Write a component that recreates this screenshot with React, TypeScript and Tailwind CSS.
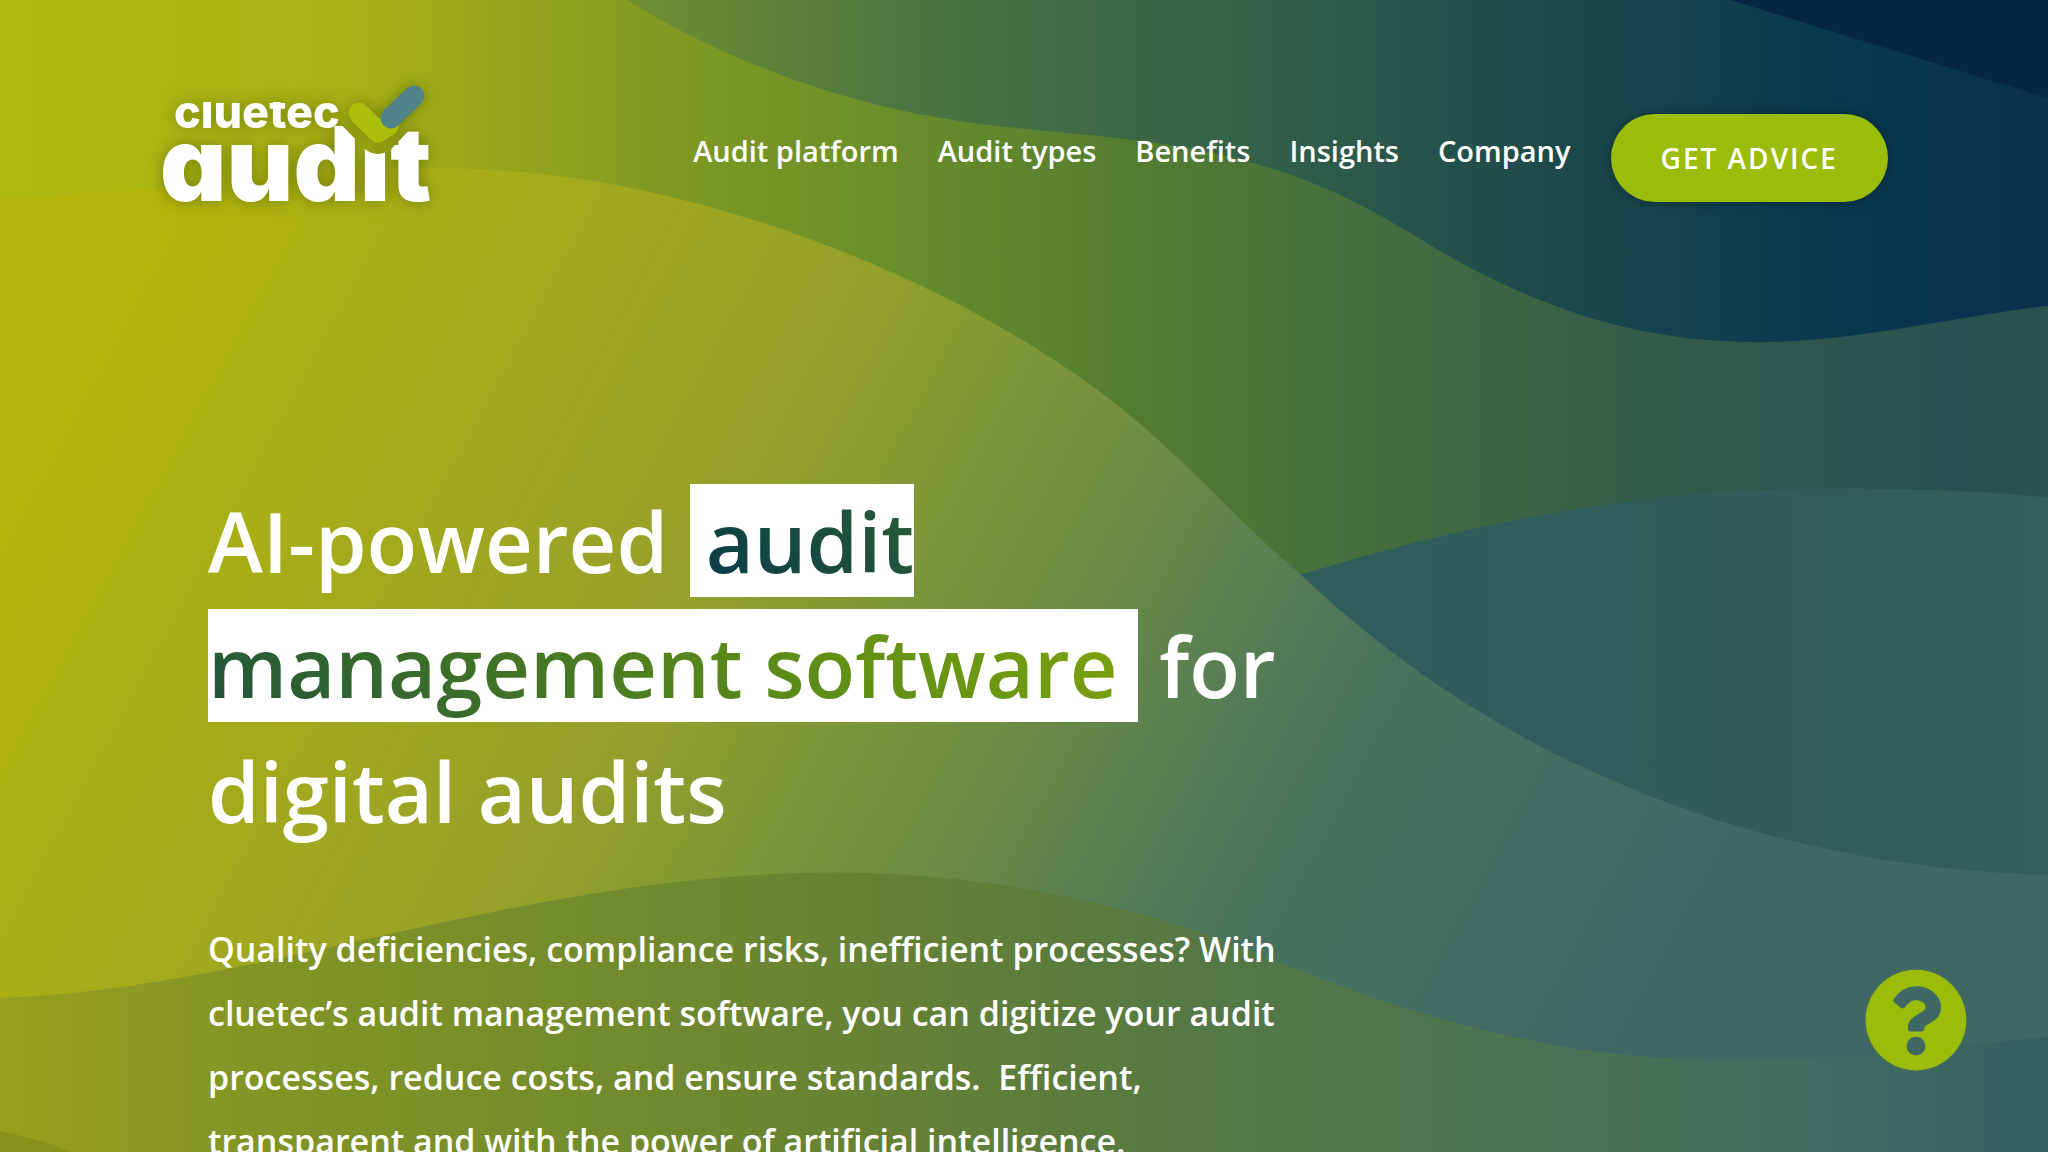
import { FaQuestionCircle } from 'react-icons/fa';

const NAV_LINKS = ['Audit platform', 'Audit types', 'Benefits', 'Insights', 'Company'];

function WaveBackground() {
  return (
    <svg
      className="absolute inset-0 h-full w-full"
      viewBox="0 0 1568 882"
      preserveAspectRatio="none"
      aria-hidden="true"
    >
      <defs>
        <linearGradient id="back" gradientUnits="userSpaceOnUse" x1="480" y1="0" x2="1568" y2="0">
          <stop offset="0" stopColor="#708f30" />
          <stop offset="0.2" stopColor="#4d7541" />
          <stop offset="0.45" stopColor="#32604a" />
          <stop offset="0.65" stopColor="#1d494b" />
          <stop offset="0.85" stopColor="#09384e" />
          <stop offset="1" stopColor="#0a314c" />
        </linearGradient>
        <linearGradient id="green" gradientUnits="userSpaceOnUse" x1="0" y1="0" x2="1568" y2="0">
          <stop offset="0" stopColor="#b0b910" />
          <stop offset="0.17" stopColor="#a9b115" />
          <stop offset="0.32" stopColor="#829a22" />
          <stop offset="0.43" stopColor="#6b8f2a" />
          <stop offset="0.55" stopColor="#557d30" />
          <stop offset="0.66" stopColor="#456f3d" />
          <stop offset="0.8" stopColor="#345c4a" />
          <stop offset="0.95" stopColor="#295151" />
          <stop offset="1" stopColor="#2a524f" />
        </linearGradient>
        <linearGradient id="teal" gradientUnits="userSpaceOnUse" x1="996" y1="0" x2="1568" y2="0">
          <stop offset="0" stopColor="#305e5d" />
          <stop offset="0.6" stopColor="#315c5a" />
          <stop offset="1" stopColor="#335f5c" />
        </linearGradient>
        <linearGradient id="front" gradientUnits="userSpaceOnUse" x1="50" y1="260" x2="1200" y2="880">
          <stop offset="0" stopColor="#b4b50a" />
          <stop offset="0.12" stopColor="#abaf14" />
          <stop offset="0.28" stopColor="#9ea621" />
          <stop offset="0.4" stopColor="#93a02b" />
          <stop offset="0.51" stopColor="#7c9538" />
          <stop offset="0.6" stopColor="#6b8b44" />
          <stop offset="0.69" stopColor="#587e53" />
          <stop offset="0.77" stopColor="#48725c" />
          <stop offset="0.88" stopColor="#446e62" />
          <stop offset="1" stopColor="#3f6864" />
        </linearGradient>
        <linearGradient id="bottom" gradientUnits="userSpaceOnUse" x1="0" y1="0" x2="1568" y2="0">
          <stop offset="0" stopColor="#96a01e" />
          <stop offset="0.12" stopColor="#839524" />
          <stop offset="0.3" stopColor="#738b2d" />
          <stop offset="0.45" stopColor="#638036" />
          <stop offset="0.6" stopColor="#547846" />
          <stop offset="0.75" stopColor="#4b7353" />
          <stop offset="0.88" stopColor="#436d61" />
          <stop offset="1" stopColor="#356062" />
        </linearGradient>
      </defs>

      <rect width="1568" height="882" fill="url(#back)" />
      <path d="M1325 0L1568 75V0Z" fill="#052742" />
      <path
        d="M0 0H480C560 50 660 85 760 96C840 105 900 106 970 128C1050 152 1090 190 1150 217C1220 250 1280 262 1350 262C1430 260 1480 245 1568 234V882H0Z"
        fill="url(#green)"
      />
      <path
        d="M996 440C1100 408 1240 374 1400 374C1470 374 1520 376 1568 381V700H1200Z"
        fill="url(#teal)"
      />
      <path
        d="M0 151C100 151 220 128 350 129C540 131 770 228 888 338C930 376 955 405 996 440C1150 586 1350 664 1568 670V882H0Z"
        fill="url(#front)"
      />
      <path
        d="M0 764C200 758 400 668 640 668C740 668 860 688 960 729C1080 778 1190 812 1330 812C1440 810 1500 800 1568 794V882H0Z"
        fill="url(#bottom)"
      />
      <path d="M0 866Q30 872 55 882H0Z" fill="#86941c" />
    </svg>
  );
}

function Logo() {
  return (
    <svg
      className="h-[130px] w-[280px] overflow-visible drop-shadow-[0_0_8px_rgba(60,80,0,0.5)]"
      viewBox="0 0 280 130"
      role="img"
      aria-label="cluetec audit"
    >
      <defs>
        {/* keeps the letters clear of the check mark */}
        <mask id="check-gap" maskUnits="userSpaceOnUse" x="0" y="0" width="280" height="130">
          <rect width="280" height="130" fill="white" />
          <path
            d="M192 25L218 52L255 13"
            fill="none"
            stroke="black"
            strokeWidth="40"
            strokeLinecap="round"
            strokeLinejoin="round"
          />
        </mask>
        <clipPath id="low-caps">
          <rect x="0" y="20" width="200" height="40" />
        </clipPath>
      </defs>
      <g
        fill="white"
        className="font-['Inter',sans-serif] [font-feature-settings:'cv11','ss01']"
      >
        <text x="14" y="46" fontSize="45" fontWeight="800" clipPath="url(#low-caps)">
          cluetec
        </text>
        <g mask="url(#check-gap)">
          <text x="0" y="119" fontSize="103" fontWeight="900">
            audit
          </text>
        </g>
      </g>
      <path
        d="M199 31L218 50L228 44"
        fill="none"
        stroke="#a9bf0a"
        strokeWidth="21"
        strokeLinecap="round"
        strokeLinejoin="round"
      />
      <path d="M231 36L254 14" fill="none" stroke="#4f8389" strokeWidth="21" strokeLinecap="round" />
    </svg>
  );
}

function Header() {
  return (
    <header className="flex items-start justify-between px-40 pt-[82px]">
      <a href="#home">
        <Logo />
      </a>
      <div className="mt-8 flex items-center gap-10">
        <nav className="flex gap-[39px] pb-[14px] text-[29px] font-semibold leading-10">
          {NAV_LINKS.map(link => (
            <a key={link} href={`#${link.toLowerCase().replace(' ', '-')}`} className="whitespace-nowrap">
              {link}
            </a>
          ))}
        </nav>
        <a
          href="#advice"
          className="flex h-[88px] items-center whitespace-nowrap rounded-full bg-[#9bbc08] px-[50px] text-[28px] font-semibold tracking-[2px] shadow-[0_0_12px_rgba(0,0,0,0.3)]"
        >
          GET ADVICE
        </a>
      </div>
    </header>
  );
}

export default function App() {
  return (
    <div className="relative h-screen overflow-hidden bg-[#6b8f2a] font-['Open_Sans',sans-serif] text-white">
      <WaveBackground />
      <div className="relative">
        <Header />
        <main className="px-[208px] pt-[266px]">
          <h1 className="max-w-[1120px] text-[83px] font-semibold leading-[125px]">
            AI-powered{' '}
            <span className="bg-white">
              <span className="bg-[linear-gradient(45deg,#06384a,#2c6032_28%,#5a8a18_65%,#7ea40c)] bg-clip-text pl-4 pr-5 text-transparent">
                audit management software
              </span>
            </span>{' '}
            for digital audits
          </h1>
          <p className="mt-16 max-w-[1090px] whitespace-pre-wrap text-[34px] font-semibold leading-[64px]">
            Quality deficiencies, compliance risks, inefficient processes? With cluetec’s audit management software, you can digitize your audit processes, reduce costs, and ensure standards.{'  '}Efficient, transparent and with the power of artificial intelligence.
          </p>
        </main>
      </div>
      <button
        type="button"
        aria-label="Help"
        className="fixed right-20 bottom-20 rounded-full text-[104px] text-[#9bbc08]"
      >
        <FaQuestionCircle />
      </button>
    </div>
  );
}
